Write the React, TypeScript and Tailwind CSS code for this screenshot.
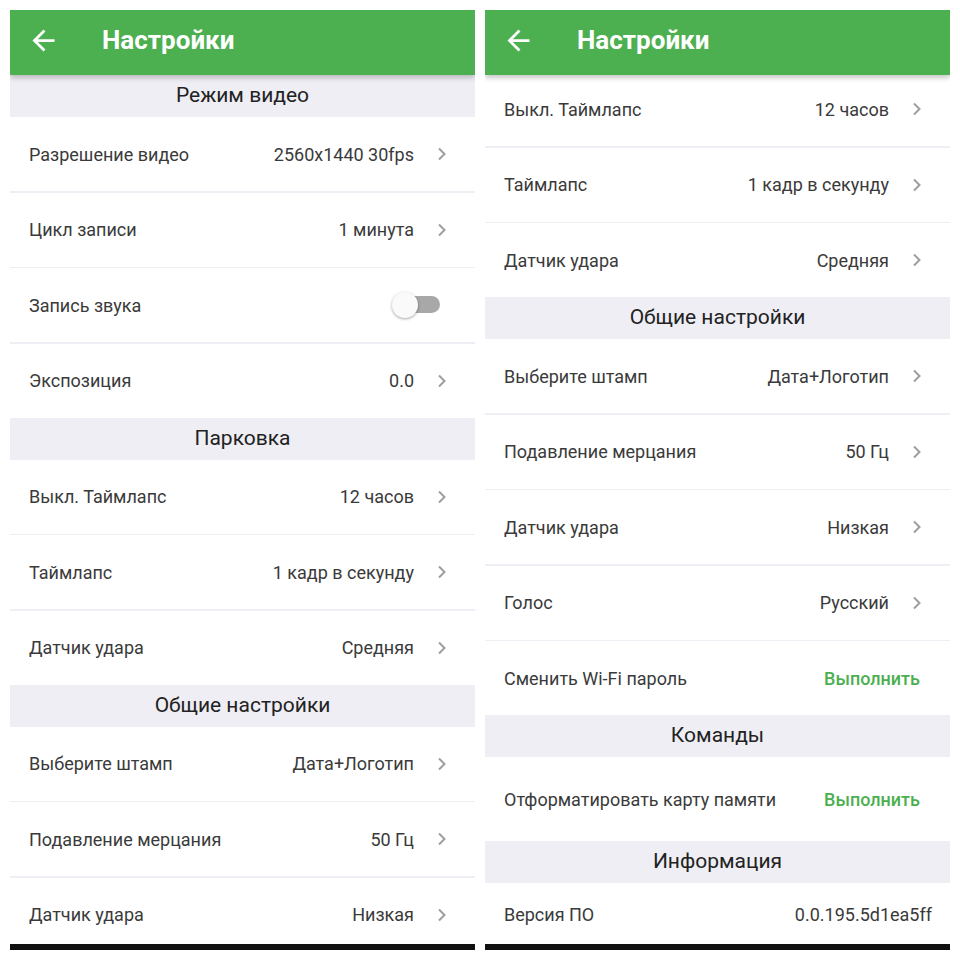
import React from "react";

type Item =
  | { kind: "section"; title: string }
  | { kind: "row"; label: string; value?: string; chevron?: boolean; toggle?: boolean; action?: boolean; h?: string };

const leftItems: Item[] = [
  { kind: "section", title: "Режим видео" },
  { kind: "row", label: "Разрешение видео", value: "2560x1440 30fps", chevron: true },
  { kind: "row", label: "Цикл записи", value: "1 минута", chevron: true },
  { kind: "row", label: "Запись звука", toggle: true },
  { kind: "row", label: "Экспозиция", value: "0.0", chevron: true },
  { kind: "section", title: "Парковка" },
  { kind: "row", label: "Выкл. Таймлапс", value: "12 часов", chevron: true },
  { kind: "row", label: "Таймлапс", value: "1 кадр в секунду", chevron: true },
  { kind: "row", label: "Датчик удара", value: "Средняя", chevron: true },
  { kind: "section", title: "Общие настройки" },
  { kind: "row", label: "Выберите штамп", value: "Дата+Логотип", chevron: true },
  { kind: "row", label: "Подавление мерцания", value: "50 Гц", chevron: true },
  { kind: "row", label: "Датчик удара", value: "Низкая", chevron: true },
];

const rightItems: Item[] = [
  { kind: "row", label: "Выкл. Таймлапс", value: "12 часов", chevron: true },
  { kind: "row", label: "Таймлапс", value: "1 кадр в секунду", chevron: true },
  { kind: "row", label: "Датчик удара", value: "Средняя", chevron: true },
  { kind: "section", title: "Общие настройки" },
  { kind: "row", label: "Выберите штамп", value: "Дата+Логотип", chevron: true },
  { kind: "row", label: "Подавление мерцания", value: "50 Гц", chevron: true },
  { kind: "row", label: "Датчик удара", value: "Низкая", chevron: true },
  { kind: "row", label: "Голос", value: "Русский", chevron: true },
  { kind: "row", label: "Сменить Wi-Fi пароль", value: "Выполнить", action: true },
  { kind: "section", title: "Команды" },
  { kind: "row", label: "Отформатировать карту памяти", value: "Выполнить", action: true, h: "h-[84px]" },
  { kind: "section", title: "Информация" },
  { kind: "row", label: "Версия ПО", value: "0.0.195.5d1ea5ff", h: "h-[62px]" },
];

function Chevron() {
  return (
    <svg width="11" height="14" viewBox="0 0 11 14" className="ml-[22px] mr-[10px]">
      <path d="M3 1.5 8.5 7 3 12.5" fill="none" stroke="#9e9e9e" strokeWidth="2" />
    </svg>
  );
}

function Toggle() {
  return (
    <div className="relative mr-[17px] h-[26px] w-[48px]">
      <div className="absolute right-0 top-[4px] h-[17px] w-[40px] rounded-full bg-[#a8a8a8]" />
      <div className="absolute left-0 top-0 h-[26px] w-[26px] rounded-full bg-[#fafafa] shadow-[0_1px_3px_rgba(0,0,0,0.35)]" />
    </div>
  );
}

function Row({ item }: { item: Extract<Item, { kind: "row" }> }) {
  return (
    <div className={`flex ${item.h ?? "h-[74px]"} items-center justify-between bg-white pl-[19px] pr-[18px]`}>
      <span className="text-[18px] text-[#3a3a3a]">{item.label}</span>
      <div className="flex items-center">
        {item.toggle ? (
          <Toggle />
        ) : item.action ? (
          <span className="mr-[12px] text-[18px] font-medium text-[#4caf50]">{item.value}</span>
        ) : (
          <span className="text-[18px] text-[#3a3a3a]">{item.value}</span>
        )}
        {item.chevron && <Chevron />}
      </div>
    </div>
  );
}

function List({ items }: { items: Item[] }) {
  return (
    <>
      {items.map((it, i) => {
        if (it.kind === "section") {
          return (
            <div key={i} className="flex h-[42px] shrink-0 items-center justify-center bg-[#efeef4] text-[21px] text-[#222]">
              {it.title}
            </div>
          );
        }
        const next = items[i + 1];
        return (
          <React.Fragment key={i}>
            <Row item={it} />
            {next && next.kind === "row" && <div className="h-[1.5px] bg-[#efeef4]" />}
          </React.Fragment>
        );
      })}
    </>
  );
}

function Panel({ items, offset }: { items: Item[]; offset?: boolean }) {
  return (
    <div className="flex h-[940px] w-[465px] flex-col overflow-hidden bg-white">
      <div className="relative z-10 flex h-[65px] shrink-0 items-center bg-[#4caf50] shadow-[0_3px_5px_rgba(0,0,0,0.22)]">
        <svg width="33" height="33" viewBox="0 0 24 24" className="ml-[17px] mt-[-4px]">
          <path fill="#fff" d="M20 11H7.83l5.59-5.59L12 4l-8 8 8 8 1.41-1.41L7.83 13H20v-2z" />
        </svg>
        <span className="ml-[42px] mt-[-5px] text-[26px] font-bold text-white">Настройки</span>
      </div>
      <div className="flex-1 overflow-hidden">
        <div className={offset ? "-mt-[3px]" : ""}>
          <List items={items} />
        </div>
      </div>
      <div className="h-[6px] shrink-0 bg-[#111]" />
    </div>
  );
}

export default function App() {
  return (
    <div className="flex h-[960px] w-[960px] gap-[10px] bg-white p-[10px] font-['Roboto',sans-serif]">
      <Panel items={leftItems} />
      <Panel items={rightItems} offset />
    </div>
  );
}
